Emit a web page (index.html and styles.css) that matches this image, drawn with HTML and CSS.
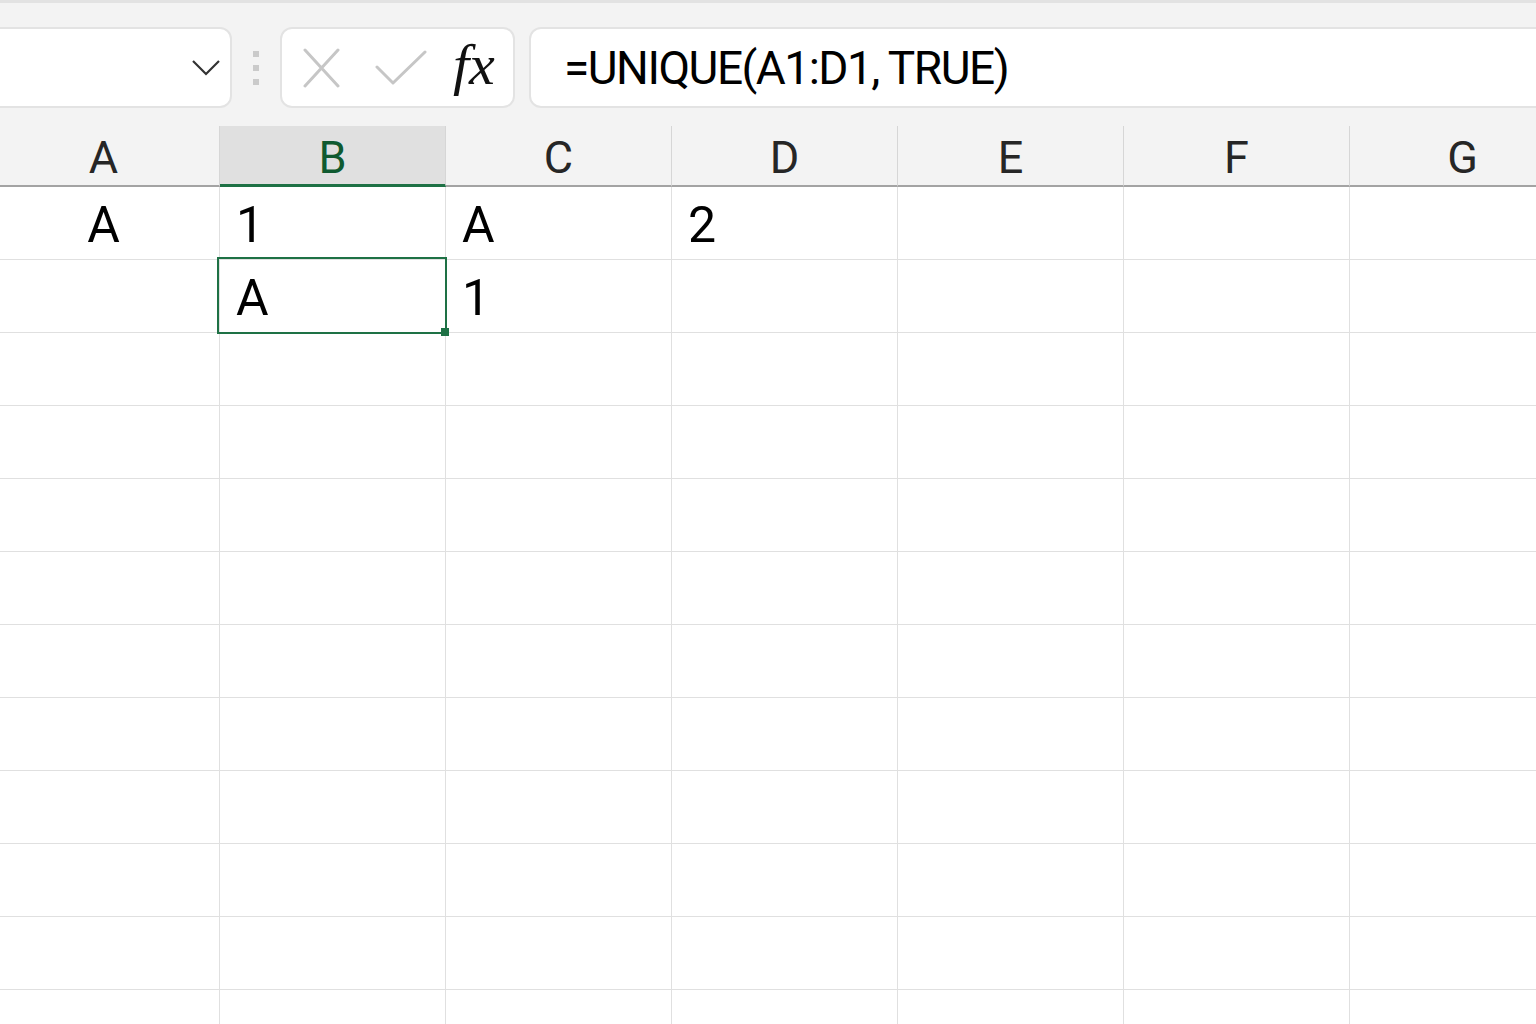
FILE: index.html
```html
<!DOCTYPE html>
<html lang="en">
<head>
  <meta charset="UTF-8" />
  <title>UNIQUE</title>
  <link rel="stylesheet" href="styles.css">
</head>
<body>
  <div class="topline"></div>

  <!-- barra de formulas -->
  <div class="formula-bar">
    <div class="name-box">
      <svg class="chevron" width="28" height="16" viewBox="0 0 28 16"><polyline points="1,1 14,14 27,1" fill="none" stroke="#333" stroke-width="2.2"/></svg>
    </div>
    <div class="grip"><span></span><span></span><span></span></div>
    <div class="fx-box">
      <svg class="ico-x" width="37" height="40" viewBox="0 0 37 40"><path d="M2 2 L35 38 M35 2 L2 38" stroke="#c6c6c6" stroke-width="3" stroke-linecap="round"/></svg>
      <svg class="ico-ok" width="52" height="36" viewBox="0 0 52 36"><polyline points="2,17 18,33 50,2" fill="none" stroke="#c6c6c6" stroke-width="3" stroke-linecap="round" stroke-linejoin="round"/></svg>
      <span class="fx">fx</span>
    </div>
    <div class="formula-input">=UNIQUE(A1:D1, TRUE)</div>
  </div>

  <div class="sheet">
    <div class="col-head">
      <div class="ch">A</div>
      <div class="ch sel">B</div>
      <div class="ch">C</div>
      <div class="ch">D</div>
      <div class="ch">E</div>
      <div class="ch">F</div>
      <div class="ch">G</div>
    </div>
    <div id="grid"></div>
  </div>

  <script>
    // datos de la hoja
    const data = [
      ["A", "1", "A", "2", "", "", ""],
      ["", "A", "1", "", "", "", ""]
    ];
    const grid = document.getElementById("grid");
    for (let r = 0; r < 12; r++) {
      const row = document.createElement("div");
      row.className = "row";
      for (let c = 0; c < 7; c++) {
        const cell = document.createElement("div");
        cell.className = "cell" + (c === 0 ? " first" : "");
        if (r === 1 && c === 1) {
          cell.className += " active";
          const h = document.createElement("span");
          h.className = "handle";
          cell.appendChild(h);
        }
        const val = data[r] ? data[r][c] : "";
        if (val) {
          const t = document.createElement("span");
          t.textContent = val;
          cell.appendChild(t);
        }
        row.appendChild(cell);
      }
      grid.appendChild(row);
    }
  </script>
</body>
</html>
```

FILE: styles.css
```css
body {
  margin: 0;
  background: #f3f3f3;
  font-family: Roboto, "Noto Sans", sans-serif;
  height: 1024px;
  overflow: hidden;
}
.topline {
  height: 3px;
  background: #e2e2e2;
}
.formula-bar {
  display: flex;
  height: 81px;
  margin-top: 24px;
}
.name-box {
  width: 246px;
  margin-left: -14px;
  box-sizing: border-box;
  background: #fff;
  border: 2px solid #e3e3e3;
  border-radius: 12px;
  display: flex;
  align-items: center;
  justify-content: flex-end;
  padding-right: 10px;
}
.grip {
  width: 48px;
  display: flex;
  flex-direction: column;
  align-items: center;
  justify-content: center;
  gap: 8px;
}
.grip span {
  width: 6px;
  height: 6px;
  background: #cacaca;
}
.fx-box {
  width: 235px;
  box-sizing: border-box;
  background: #fff;
  border: 2px solid #e3e3e3;
  border-radius: 12px;
  display: flex;
  align-items: center;
  padding-left: 21px;
}
.ico-ok {
  margin-left: 35px;
}
.fx {
  margin-left: 26px;
  font-family: "Liberation Serif", serif;
  font-style: italic;
  font-size: 58px;
  color: #111;
  margin-top: -6px;
}
.formula-input {
  flex: 1;
  margin-left: 14px;
  margin-right: -20px;
  box-sizing: border-box;
  background: #fff;
  border: 2px solid #e3e3e3;
  border-radius: 12px;
  display: flex;
  align-items: center;
  padding-left: 33px;
  font-size: 46px;
  letter-spacing: -1.5px;
  color: #000;
}
.sheet {
  margin-top: 18px;
  margin-left: -12px;
}
.col-head, .row {
  display: grid;
  grid-template-columns: 232px repeat(6, 226px);
}
.ch {
  height: 61px;
  box-sizing: border-box;
  border-right: 1px solid #d6d6d6;
  border-bottom: 2px solid #a3a3a3;
  display: flex;
  justify-content: center;
  align-items: flex-end;
  padding-bottom: 5px;
  font-size: 45px;
  line-height: 1;
  color: #262626;
}
.ch.sel {
  background: #e0e0e0;
  border-bottom: 3px solid #1e7145;
  padding-bottom: 4px;
  color: #0f5a30;
}
.row {
  background: #fff;
}
.cell {
  height: 73px;
  box-sizing: border-box;
  border-right: 1px solid #e0e0e0;
  border-bottom: 1px solid #e0e0e0;
  display: flex;
  align-items: flex-end;
  padding: 0 16px 9px;
  font-size: 50px;
  line-height: 1;
  color: #000;
}
.cell.first {
  justify-content: center;
}
.cell.active {
  position: relative;
}
.cell.active::after {
  content: "";
  position: absolute;
  left: -3px;
  top: -3px;
  right: -2px;
  bottom: -2px;
  border: 2px solid #1e7145;
}
.handle {
  position: absolute;
  right: -4px;
  bottom: -4px;
  width: 8px;
  height: 8px;
  background: #1e7145;
  z-index: 2;
}
```
